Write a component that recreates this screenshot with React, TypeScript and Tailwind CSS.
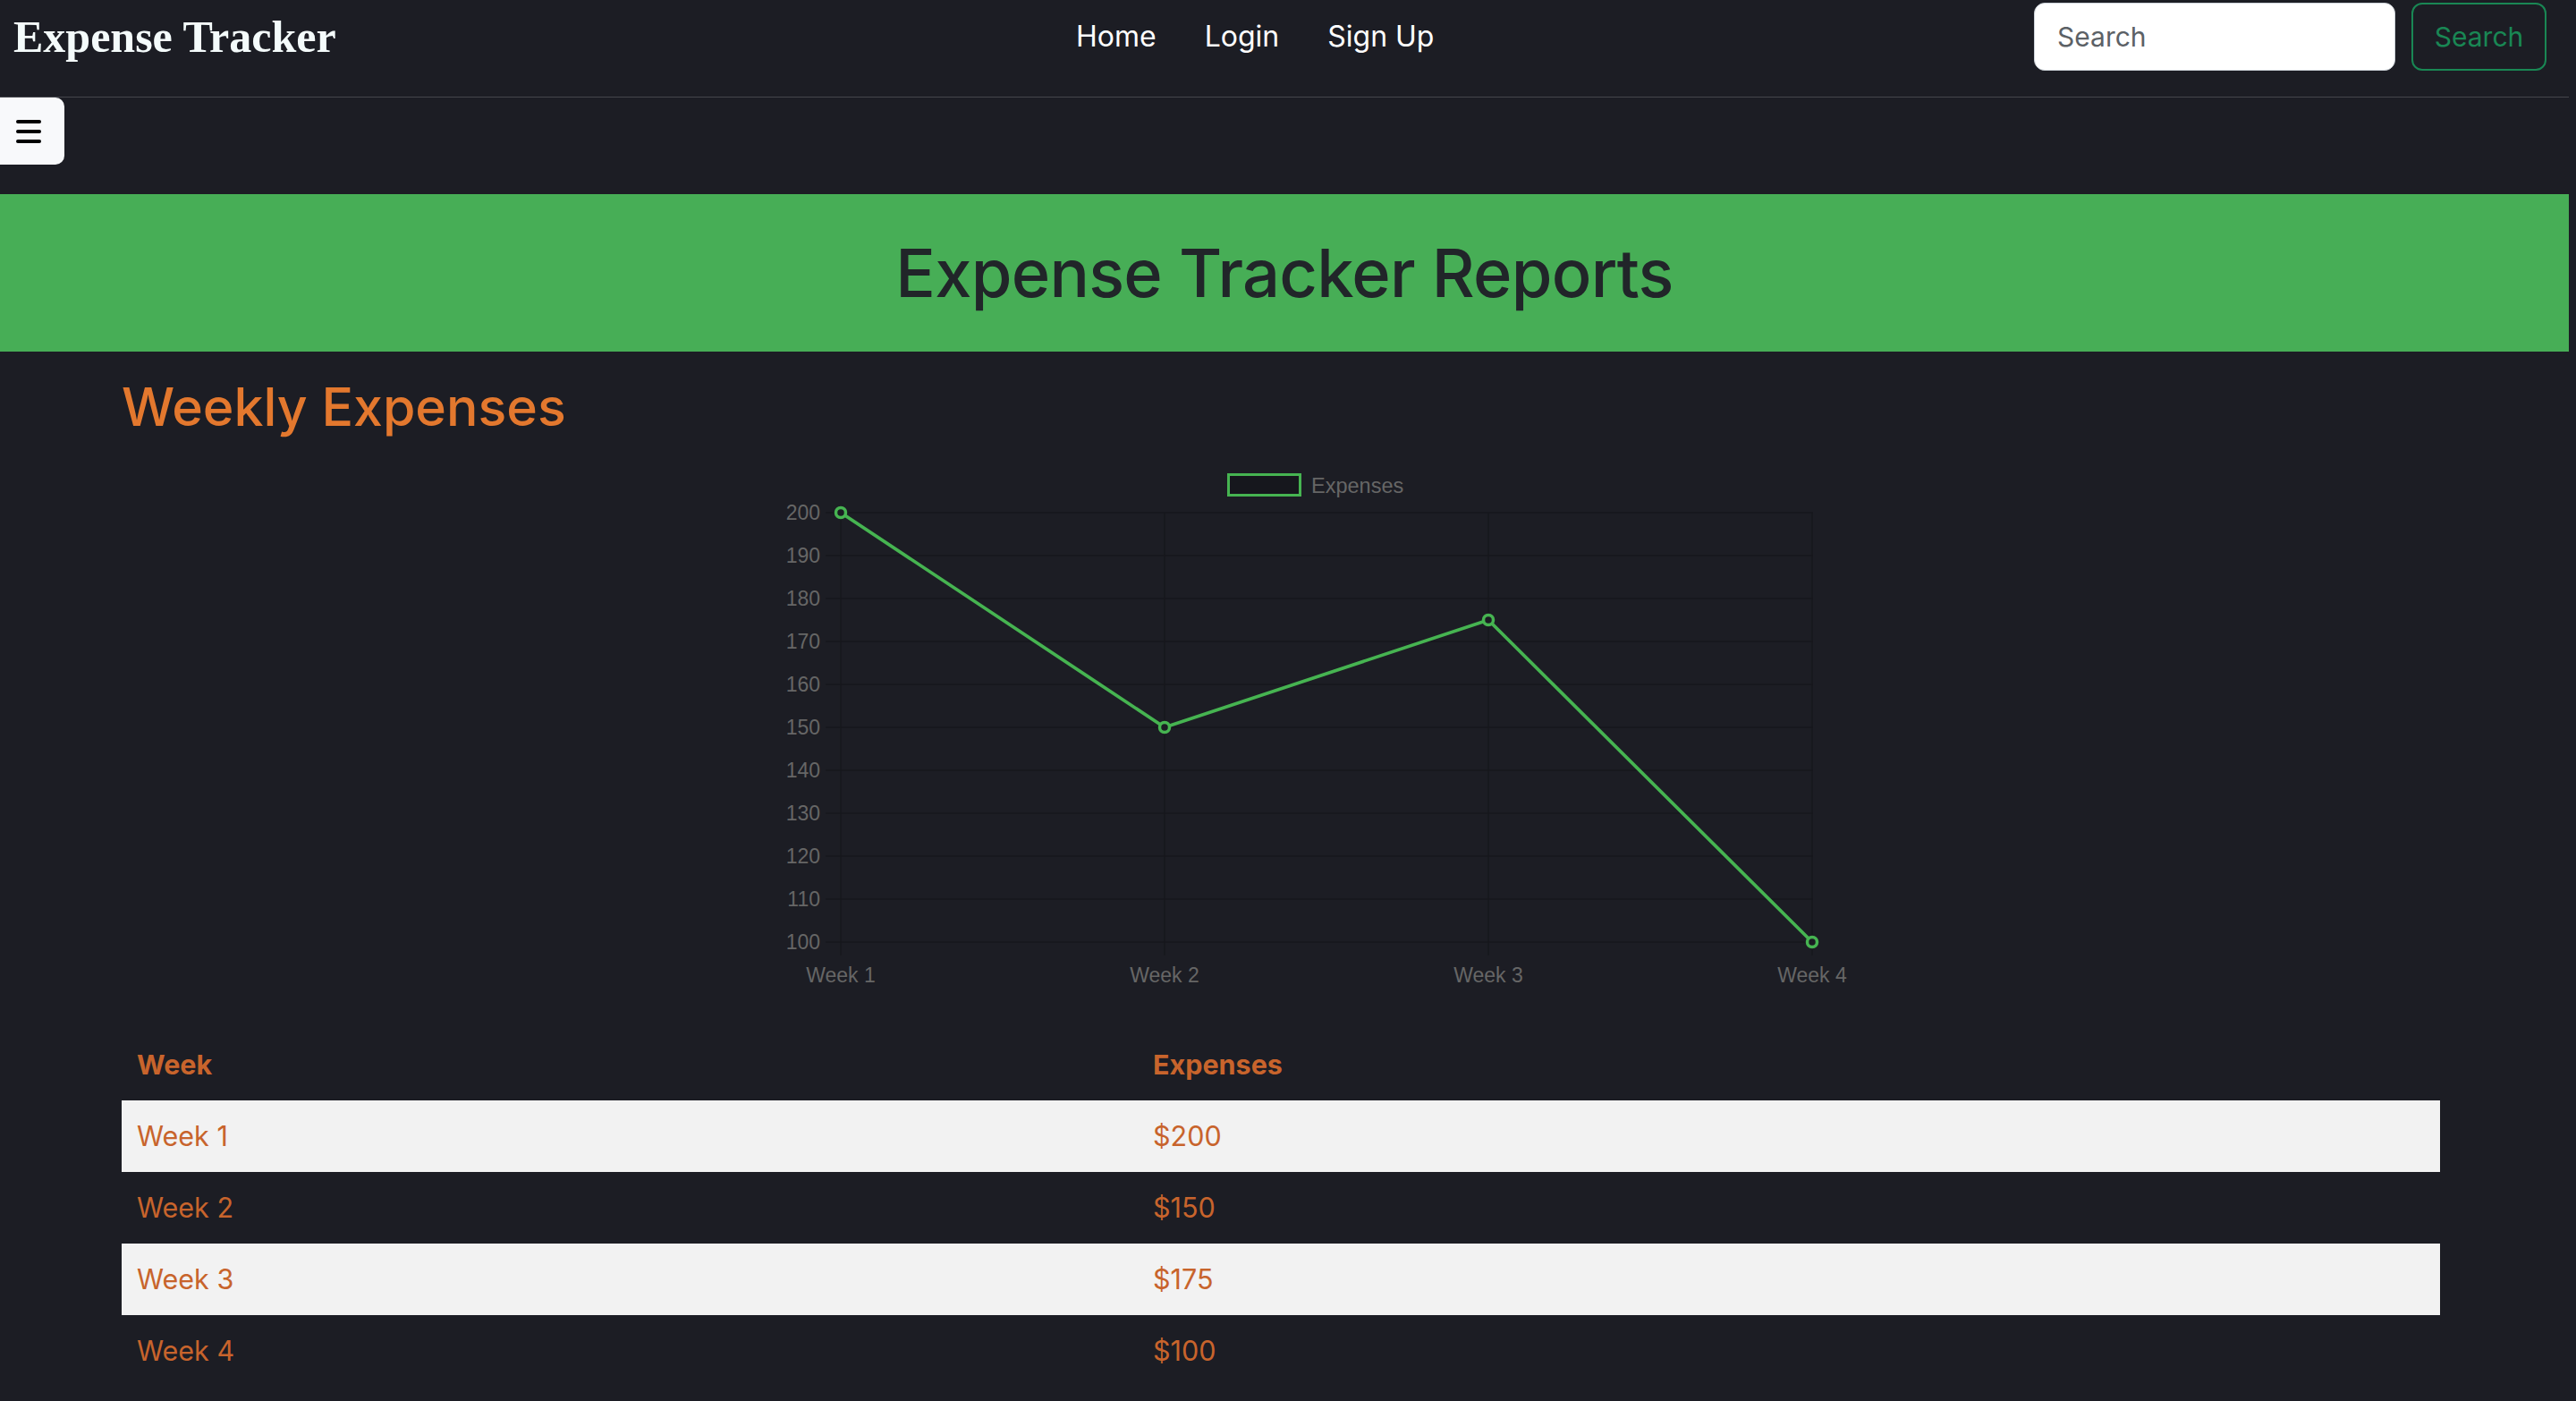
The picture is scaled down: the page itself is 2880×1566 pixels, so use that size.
import React from "react";

const points = [
  { label: "Week 1", value: 200 },
  { label: "Week 2", value: 150 },
  { label: "Week 3", value: 175 },
  { label: "Week 4", value: 100 },
];

function Chart() {
  const top = 83;
  const step = 48;
  const x0 = 804;
  const dx = 362;
  const yFor = (v: number) => top + ((200 - v) / 10) * step;
  const ticks = [200, 190, 180, 170, 160, 150, 140, 130, 120, 110, 100];
  const pts = points.map((p, i) => ({ x: x0 + i * dx, y: yFor(p.value), label: p.label }));
  return (
    <svg width={2592} height={660} className="block" style={{ fontFamily: '"Liberation Sans", Arial, sans-serif' }}>
      {ticks.map((t, i) => (
        <g key={t}>
          <line x1={787} x2={1891} y1={top + i * step} y2={top + i * step} stroke="#16171c" strokeWidth={1.3} />
          <text x={781} y={top + i * step + 8} fontSize={23} fill="#666" textAnchor="end">
            {t}
          </text>
        </g>
      ))}
      {pts.map((p) => (
        <g key={p.label}>
          <line x1={p.x} x2={p.x} y1={top} y2={578} stroke="#16171c" strokeWidth={1.3} />
          <text x={p.x} y={608} fontSize={23} fill="#666" textAnchor="middle">
            {p.label}
          </text>
        </g>
      ))}
      <rect x={1237.5} y={40.5} width={80} height={23} fill="#16171d" stroke="#46b451" strokeWidth={3} />
      <text x={1330} y={61} fontSize={23.5} fill="#666">
        Expenses
      </text>
      <polyline
        points={pts.map((p) => `${p.x},${p.y}`).join(" ")}
        fill="none"
        stroke="#46b451"
        strokeWidth={3.7}
        strokeLinejoin="round"
      />
      {pts.map((p) => (
        <circle key={p.label} cx={p.x} cy={p.y} r={5.5} fill="#1b1c23" stroke="#46b451" strokeWidth={3.5} />
      ))}
    </svg>
  );
}

export default function App() {
  const rows = [
    { w: "Week 1", e: "$200" },
    { w: "Week 2", e: "$150" },
    { w: "Week 3", e: "$175" },
    { w: "Week 4", e: "$100" },
  ];
  return (
    <div className="min-h-screen w-full bg-[#1c1d24]" style={{ fontFamily: "Inter, 'Noto Sans', sans-serif" }}>
      <div className="w-[2872px]">
        <header className="h-[109px] border-b border-[#45464c]">
          <div className="flex h-[82px] items-center">
            <div className="w-[1203px] pl-[15px]">
              <span
                className="text-[50px] font-bold leading-none text-[#f4fbfb]"
                style={{ fontFamily: '"Liberation Serif", "Times New Roman", serif' }}
              >
                Expense Tracker
              </span>
            </div>
            <nav className="flex gap-[54px] text-[32px] text-white">
              <a>Home</a>
              <a>Login</a>
              <a>Sign Up</a>
            </nav>
            <div className="ml-auto mr-[25px] flex items-center gap-[18px]">
              <div className="flex h-[76px] w-[404px] items-center rounded-[12px] border border-[#ced4da] bg-white pl-[25px] text-[30px] text-[#5c6166]">
                Search
              </div>
              <div className="flex h-[76px] w-[151px] items-center justify-center rounded-[12px] border-2 border-[#198754] text-[30px] text-[#198754]">
                Search
              </div>
            </div>
          </div>
        </header>

        <button className="flex h-[75px] w-[72px] flex-col items-start justify-center gap-[7px] rounded-r-[10px] bg-[#f8f9fb] pl-[18px]">
          <span className="block h-[4px] w-[28px] rounded-full bg-black" />
          <span className="block h-[4px] w-[28px] rounded-full bg-black" />
          <span className="block h-[4px] w-[28px] rounded-full bg-black" />
        </button>

        <div className="mt-[33px] flex h-[176px] items-center justify-center bg-[#47ae56]">
          <h1 className="text-[74px] leading-none font-medium tracking-[-0.01em] text-[#212529]">Expense Tracker Reports</h1>
        </div>

        <div className="ml-[136px] w-[2592px]">
          <h2 className="mt-[26px] text-[59px] leading-[71px] font-medium text-[#e3782e]">Weekly Expenses</h2>
          <Chart />
          <table className="w-full border-collapse text-left text-[30.5px] text-[#c8642c]">
            <colgroup>
              <col className="w-[1136px]" />
              <col />
            </colgroup>
            <thead>
              <tr className="h-[80px]">
                <th className="pl-[17px] font-bold">Week</th>
                <th className="pl-[17px] font-bold">Expenses</th>
              </tr>
            </thead>
            <tbody>
              {rows.map((r, i) => (
                <tr key={r.w} className={i % 2 === 0 ? "h-[80px] bg-[#f2f2f2]" : "h-[80px]"}>
                  <td className="pl-[17px]">{r.w}</td>
                  <td className="pl-[17px]">{r.e}</td>
                </tr>
              ))}
            </tbody>
          </table>
        </div>
      </div>
    </div>
  );
}
